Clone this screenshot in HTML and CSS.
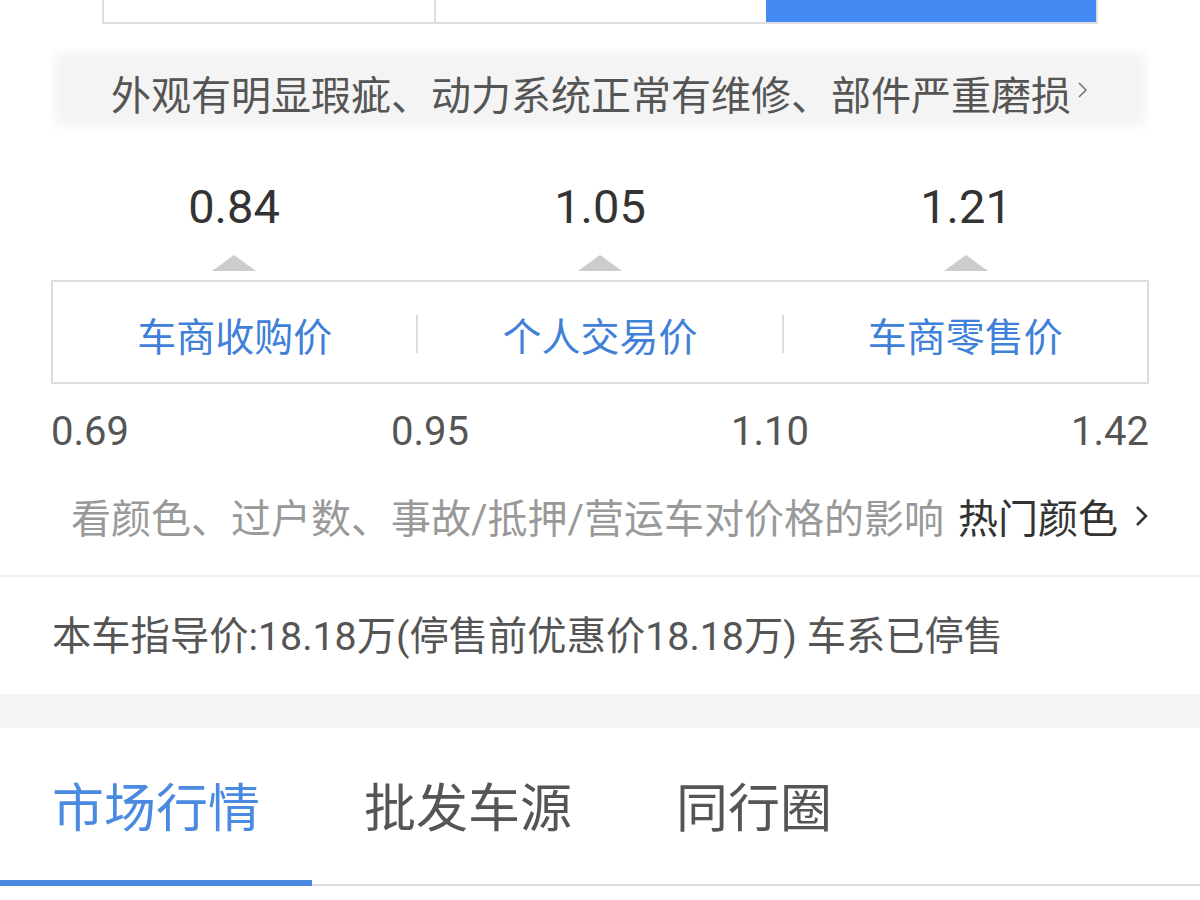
FILE: index.html
```html
<!doctype html>
<html lang="zh-CN">
  <head>
    <meta charset="UTF-8" />
    <meta name="viewport" content="width=device-width, initial-scale=1.0" />
    <title>车况估价</title>
    <link rel="stylesheet" href="styles.css">
  </head>
  <body>
    <div class="seg">
      <div class="seg-item"></div>
      <div class="seg-item"></div>
      <div class="seg-item active"></div>
    </div>

    <div class="cond">
      <span>外观有明显瑕疵、动力系统正常有维修、部件严重磨损</span>
      <svg class="cond-arrow" width="12" height="18" viewBox="0 0 12 18">
        <polyline points="2,2 9,9 2,16" fill="none" stroke="#777" stroke-width="1.6" />
      </svg>
    </div>

    <div class="prices">
      <div class="price-col">
        <div class="price-num">0.84</div>
        <div class="tri"></div>
      </div>
      <div class="price-col">
        <div class="price-num">1.05</div>
        <div class="tri"></div>
      </div>
      <div class="price-col">
        <div class="price-num">1.21</div>
        <div class="tri"></div>
      </div>
    </div>

    <div class="labels">
      <div class="label">车商收购价</div>
      <div class="sep"></div>
      <div class="label">个人交易价</div>
      <div class="sep"></div>
      <div class="label">车商零售价</div>
    </div>

    <div class="scale">
      <span>0.69</span>
      <span>0.95</span>
      <span>1.10</span>
      <span>1.42</span>
    </div>

    <div class="hint">
      <span class="hint-text">看颜色、过户数、事故/抵押/营运车对价格的影响</span>
      <span class="hint-link">热门颜色</span>
      <svg class="hint-arrow" width="16" height="24" viewBox="0 0 16 24">
        <polyline points="3,3 12,12 3,21" fill="none" stroke="#333" stroke-width="2.6" />
      </svg>
    </div>

    <div class="guide">本车指导价:18.18万(停售前优惠价18.18万) 车系已停售</div>

    <div class="band"></div>

    <div class="tabs">
      <div class="tab active">市场行情</div>
      <div class="tab">批发车源</div>
      <div class="tab">同行圈</div>
    </div>
  </body>
</html>
```

FILE: styles.css
```css
body {
  font-family: Roboto, "Noto Sans CJK SC", sans-serif;
  margin: 0;
  background: #fff;
  color: #333;
}

/* 顶部选项 */
.seg {
  display: flex;
  margin: 0 102px;
  height: 22px;
  border: 2px solid #ddd;
  border-top: none;
}
.seg-item {
  flex: 1;
  border-left: 2px solid #ddd;
}
.seg-item:first-child {
  border-left: none;
}
.seg-item.active {
  background: #4589f5;
  border-left: none;
}

/* 车况描述 */
.cond {
  margin: 24px 50px 0;
  height: 82px;
  display: flex;
  align-items: center;
  justify-content: center;
  padding-top: 8px;
  box-sizing: border-box;
  background: #f4f4f4;
  box-shadow: inset 0 0 12px 4px #fff;
  font-size: 40px;
  color: #555;
}
.cond-arrow {
  margin-left: 6px;
  margin-top: -6px;
}

/* 价格 */
.prices {
  display: flex;
  margin: 53px 51px 0;
}
.price-col {
  flex: 1;
  display: flex;
  flex-direction: column;
  align-items: center;
}
.price-num {
  font-size: 47px;
  line-height: 48px;
  color: #333;
}
.tri {
  margin-top: 24px;
  width: 0;
  height: 0;
  border-left: 22px solid transparent;
  border-right: 22px solid transparent;
  border-bottom: 16px solid #ccc;
}

.labels {
  display: flex;
  align-items: center;
  margin: 9px 51px 0;
  padding-top: 4px;
  box-sizing: border-box;
  height: 104px;
  border: 2px solid #ddd;
}
.label {
  flex: 1;
  text-align: center;
  font-size: 39px;
  color: #3f80d8;
}
.sep {
  width: 2px;
  height: 38px;
  background: #ddd;
}

.scale {
  display: flex;
  justify-content: space-between;
  margin: 28px 51px 0;
  font-size: 40px;
  line-height: 40px;
  color: #555;
}

.hint {
  display: flex;
  align-items: center;
  justify-content: flex-end;
  margin: 42px 50px 0;
  height: 44px;
  font-size: 40px;
}
.hint-text {
  color: #999;
}
.hint-link {
  color: #333;
  margin-left: 14px;
}
.hint-arrow {
  margin-left: 16px;
}

.guide {
  border-top: 2px solid #eee;
  margin-top: 37px;
  padding: 39px 52px 36px;
  font-size: 39.3px;
  line-height: 42px;
  color: #555;
}

.band {
  height: 34px;
  background: #f4f5f7;
}

.tabs {
  display: flex;
  padding-top: 52px;
  border-bottom: 2px solid #ddd;
}
.tab {
  padding: 0 52px 40px;
  font-size: 52px;
  line-height: 60px;
  color: #555;
  border-bottom: 6px solid transparent;
  margin-bottom: -2px;
}
.tab.active {
  color: #4a8ae0;
  border-bottom-color: #4a8ae0;
}
```
